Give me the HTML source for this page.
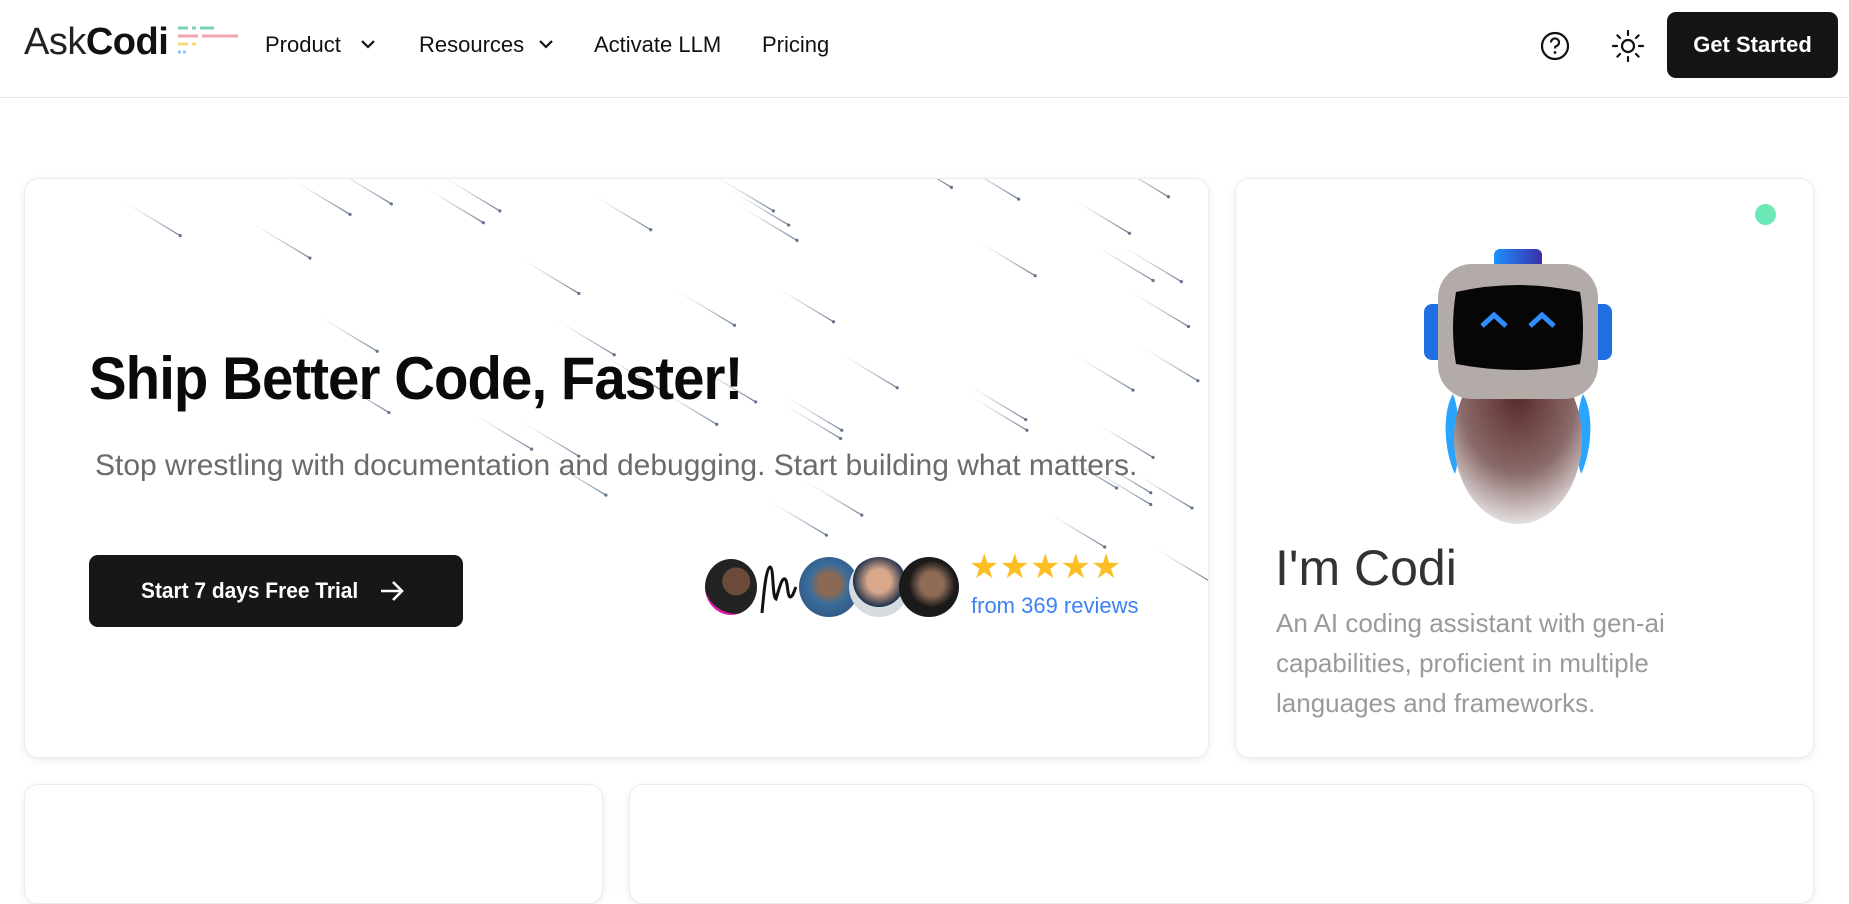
<!DOCTYPE html>
<html><head><meta charset="utf-8"><style>
*{margin:0;padding:0;box-sizing:border-box}
body{width:1849px;height:855px;overflow:hidden;background:#fff;font-family:"Liberation Sans",sans-serif;color:#111;position:relative}
.hdr{position:absolute;left:0;top:0;width:1849px;height:98px;border-bottom:1px solid #e5e5e5}
.abs{position:absolute;white-space:nowrap}
.nav{font-size:22px;color:#111;top:32px}
.card{position:absolute;background:#fff;border:1px solid #ececec;border-radius:14px;box-shadow:0 2px 8px rgba(0,0,0,.08)}
.sq{display:inline-block;transform-origin:left center}
</style></head><body>
<div class="hdr">
 <div class="abs" style="left:24px;top:21px;font-size:38px;letter-spacing:-0.5px"><span style="font-weight:300;color:#222">Ask</span><b>Codi</b></div>
 <svg class="abs" style="left:176px;top:25px" width="64" height="32">
  <g stroke-width="3"><line x1="2" y1="3" x2="12" y2="3" stroke="#7dd3b0"/><line x1="16" y1="3" x2="20" y2="3" stroke="#7dd3b0"/><line x1="24" y1="3" x2="38" y2="3" stroke="#7dd3b0"/>
  <line x1="2" y1="11" x2="22" y2="11" stroke="#f4a5b5"/><line x1="26" y1="11" x2="62" y2="11" stroke="#f4a5b5"/>
  <line x1="2" y1="19" x2="12" y2="19" stroke="#f7dc7a"/><line x1="16" y1="19" x2="20" y2="19" stroke="#f7dc7a"/>
  <line x1="2" y1="27" x2="5" y2="27" stroke="#93c5fd"/><line x1="7" y1="27" x2="10" y2="27" stroke="#93c5fd"/></g></svg>
 <div class="abs nav" style="left:265px">Product</div>
 <svg class="abs" style="left:360px;top:38px" width="16" height="12"><path d="M2 3l6 6 6-6" stroke="#111" stroke-width="2.2" fill="none"/></svg>
 <div class="abs nav" style="left:419px">Resources</div>
 <svg class="abs" style="left:538px;top:38px" width="16" height="12"><path d="M2 3l6 6 6-6" stroke="#111" stroke-width="2.2" fill="none"/></svg>
 <div class="abs nav" style="left:594px">Activate LLM</div>
 <div class="abs nav" style="left:762px">Pricing</div>
 <svg class="abs" style="left:1539px;top:30px" width="32" height="32"><circle cx="16" cy="16" r="13" stroke="#111" stroke-width="2.2" fill="none"/><path d="M12 12.5a4 4 0 1 1 5 3.8c-1 .4-1 1-1 2.2" stroke="#111" stroke-width="2.2" fill="none"/><circle cx="16" cy="22.5" r="1.4" fill="#111"/></svg>
 <svg class="abs" style="left:1610px;top:28px" width="36" height="36"><circle cx="18" cy="18" r="6" stroke="#111" stroke-width="2.2" fill="none"/><g stroke="#111" stroke-width="2.2" stroke-linecap="round"><line x1="18" y1="3" x2="18" y2="7"/><line x1="18" y1="29" x2="18" y2="33"/><line x1="3" y1="18" x2="7" y2="18"/><line x1="29" y1="18" x2="33" y2="18"/><line x1="7.4" y1="7.4" x2="10" y2="10"/><line x1="26" y1="26" x2="28.6" y2="28.6"/><line x1="7.4" y1="28.6" x2="10" y2="26"/><line x1="26" y1="10" x2="28.6" y2="7.4"/></g></svg>
 <div class="abs" style="left:1667px;top:12px;width:171px;height:66px;background:#151515;border-radius:9px;color:#fff;font-size:22px;font-weight:bold;text-align:center;line-height:66px">Get Started</div>
</div>

<div class="card" style="left:24px;top:178px;width:1185px;height:580px;overflow:hidden">
 <svg class="abs" style="left:-24px;top:-178px" width="1210" height="760" id="met"></svg>
 <div class="abs" style="left:64px;top:165px;font-size:60px;font-weight:bold;color:#0a0a0a"><span class="sq" style="transform:scaleX(0.94);letter-spacing:-1px">Ship Better Code, Faster!</span></div>
 <div class="abs" style="left:70px;top:270px;font-size:30px;color:#6b6b6b"><span class="sq" style="transform:scaleX(1.0)">Stop wrestling with documentation and debugging. Start building what matters.</span></div>
 <div class="abs" style="left:64px;top:376px;width:374px;height:72px;background:#171717;border-radius:9px;color:#fff;font-size:22px;font-weight:bold;line-height:72px;padding-left:52px"><span class="sq" style="transform:scaleX(0.95)">Start 7 days Free Trial</span>
  <svg style="position:absolute;left:290px;top:24px" width="26" height="24"><path d="M2 12h21M14 3l9 9-9 9" stroke="#fff" stroke-width="2.6" fill="none"/></svg></div>
 <div class="abs" style="left:680px;top:380px;width:52px;height:56px;border-radius:50%;background:radial-gradient(circle at 60% 40%,#6b4a3a 0 30%,#222 31% 70%,#e21aa8 71%)"></div>
 <svg class="abs" style="left:733px;top:382px" width="40" height="56"><path d="M4 52C6 30 8 8 12 6c4 0 2 30 6 32 3-10 6-22 9-20 3 2 2 16 5 18 3 0 4-6 6-10" stroke="#111" stroke-width="3" fill="none"/></svg>
 <div class="abs" style="left:774px;top:378px;width:60px;height:60px;border-radius:50%;background:radial-gradient(circle at 50% 45%,#8a6a52 0 25%,#3a6c9b 45%,#2a4d73)"></div>
 <div class="abs" style="left:824px;top:378px;width:60px;height:60px;border-radius:50%;background:radial-gradient(circle at 50% 40%,#d9a88a 0 25%,#20324a 55%,#d6dbe0 56%)"></div>
 <div class="abs" style="left:874px;top:378px;width:60px;height:60px;border-radius:50%;background:radial-gradient(circle at 55% 45%,#8f6a55 0 25%,#1a1a1a 50%)"></div>
 <div class="abs" style="left:944px;top:368px;font-size:34px;color:#fbbf24;letter-spacing:0px">★★★★★</div>
 <div class="abs" style="left:946px;top:414px;font-size:22px;color:#3b82f6">from 369 reviews</div>
</div>

<div class="card" style="left:1235px;top:178px;width:579px;height:580px">
 <div class="abs" style="left:519px;top:25px;width:21px;height:21px;border-radius:50%;background:#6ee7b7"></div>
 <svg class="abs" style="left:188px;top:65px" width="200" height="280">
  <defs><radialGradient id="bd" cx="50%" cy="25%" r="75%"><stop offset="0" stop-color="#5a2a2a"/><stop offset=".6" stop-color="#8a6a6a"/><stop offset="1" stop-color="#e5e0e0"/></radialGradient>
  <linearGradient id="bl" x1="0" x2="1"><stop offset="0" stop-color="#1e90ff"/><stop offset="1" stop-color="#3b2fa8"/></linearGradient></defs>
  <rect x="70" y="5" width="48" height="20" rx="6" fill="url(#bl)"/>
  <rect x="0" y="60" width="26" height="56" rx="8" fill="#1e6fe0"/><rect x="162" y="60" width="26" height="56" rx="8" fill="#1e6fe0"/>
  <path d="M29 150c-12 20-8 60 2 80 6-20 6-60-2-80zM159 150c12 20 8 60-2 80-6-20-6-60 2-80z" fill="#2aa5ff"/>
  <ellipse cx="94" cy="195" rx="64" ry="85" fill="url(#bd)"/>
  <rect x="14" y="20" width="160" height="135" rx="34" fill="#b3aba8"/>
  <path d="M32 48q62-14 124 0q6 36 0 72q-62 12-124 0q-6-36 0-72z" fill="#060606"/>
  <path d="M58 82l12-11 12 11M106 82l12-11 12 11" stroke="#2f8cff" stroke-width="5" fill="none"/>
 </svg>
 <div class="abs" style="left:39px;top:360px;font-size:50px;color:#333">I'm Codi</div>
 <div class="abs" style="left:40px;top:424px;font-size:26px;line-height:40px;color:#9a9a9a;white-space:normal;width:430px">An AI coding assistant with gen-ai capabilities, proficient in multiple languages and frameworks.</div>
</div>

<div class="card" style="left:24px;top:784px;width:579px;height:120px"></div>
<div class="card" style="left:629px;top:784px;width:1185px;height:120px"></div>

<script>
var p=[[152,199],[262,218],[296,181],[331,172],[409,188],[423,178],[551,194],[490,248],[622,275],[706,272],[655,178],[675,203],[668,190],[806,158],[863,168],[957,197],[990,166],[877,233],[977,237],[1001,238],[1007,276],[319,297],[329,349],[490,386],[513,419],[607,359],[712,371],[713,364],[760,328],[870,364],[869,355],[960,330],[977,387],[975,417],[946,413],[936,463],[700,453],[730,436],[975,427],[1025,492],[1015,322],[1010,430],[450,380],[640,340],[560,330],[520,300]];
var s='<defs><linearGradient id="mg" x1="0" y1="0" x2="1" y2="0"><stop offset="0" stop-color="#cbd5e1" stop-opacity="0"/><stop offset="1" stop-color="#64748b"/></linearGradient></defs>';
p.forEach(function(a){var x=a[0]*1.1792,y=a[1]*1.1792;s+='<g transform="translate('+x+' '+y+') rotate(31)"><rect x="-68" y="-0.6" width="68" height="1.2" fill="url(#mg)"/></g><circle cx="'+x+'" cy="'+y+'" r="1.6" fill="#64748b"/>';});
document.getElementById('met').innerHTML=s;
</script>
</body></html>
